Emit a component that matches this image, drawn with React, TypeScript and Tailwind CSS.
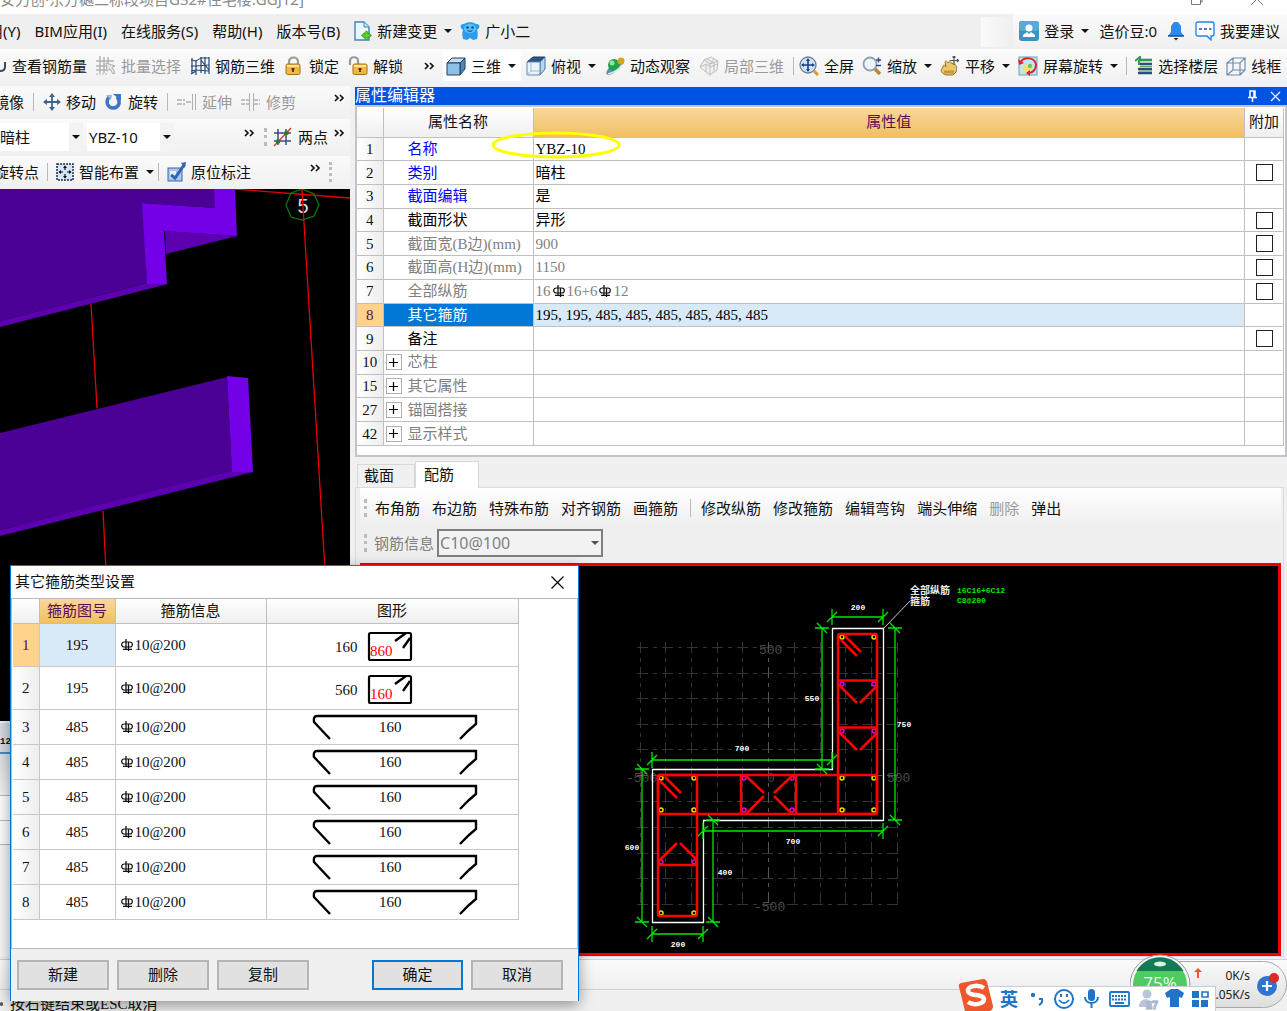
import type { ReactNode } from 'react';

const SONG = "font-['Liberation_Serif','Noto_Sans_CJK_SC',serif]";

/* ---------- icons ---------- */

function Icon({ children, w = 20 }: { children: ReactNode; w?: number }) {
  return (
    <svg width={w} height="20" viewBox={`0 0 ${w} 20`} fill="none" className="shrink-0" aria-hidden="true">
      {children}
    </svg>
  );
}

const NewDocIcon = () => (
  <Icon w={18}>
    <path d="M1 1h9l5 5v13H1z" fill="#eaf6ff" stroke="#3d86b8" strokeWidth="1.4" />
    <path d="M10 1v5h5" fill="#bfe2f7" stroke="#3d86b8" />
    <path d="M12.500 9.500l5.500 5-5.500 5-5.500-5z" fill="#3faa1c" />
    <path d="M12.500 11v7M9 14.500h7" stroke="#67cf35" strokeWidth="2" />
  </Icon>
);

const MascotIcon = () => (
  <Icon>
    <path d="M4 3C7 .5 13 .5 16 3c3 0 4 2 3 4l-2 2c1 2 1 5 0 9l-4 1-3-2-3 2-4-1C2 14 2 11 3 9L1 7C0 5 1 3 4 3z" fill="#2a9df0" />
    <ellipse cx="10" cy="7.500" rx="6" ry="4.500" fill="#5cc2fa" />
    <circle cx="7.500" cy="6.500" r="1.200" fill="#0b3f77" />
    <circle cx="12.500" cy="6.500" r="1.200" fill="#0b3f77" />
    <path d="M7.500 9.500q2.500 2 5 0" stroke="#0b3f77" />
  </Icon>
);

const RebarGridIcon = ({ color = '#23466e' }: { color?: string }) => (
  <Icon>
    <path d="M1 4l5 1 5-3 8 0M1 10l5 0 13-1M1 15l5-1 13 1" stroke={color} />
    <path d="M2 2v16M6 4v15M11 1v16M15 1v17M19 1v17M11 4l8 10M1 18l5-3" stroke={color} strokeWidth="1.200" />
  </Icon>
);

const BatchIcon = () => (
  <Icon>
    <path d="M4 0v17M8 1v16M12 1v8M0 5h18M0 10h12M0 14h12" stroke="#b3b3b3" strokeWidth="1.500" />
    <path d="M0 18h11" stroke="#b3b3b3" strokeDasharray="2 1" />
    <path d="M10 7l9 3-3 1 3 6-2 1-3-5-3 2z" fill="#e5e5e5" stroke="#b0b0b0" />
  </Icon>
);

const LockIcon = ({ open = false }: { open?: boolean }) => (
  <Icon>
    <path d={open ? 'M2 9V5c0-5 8-5 8 0v3' : 'M5 10V6c0-6 9-6 9 0v4'} stroke="#9a9a9a" strokeWidth="2.200" />
    <rect x={open ? 5 : 2} y="8" width="14" height="10.500" rx="1.500" fill="#f4b740" stroke="#a8701a" />
    <path d={open ? 'M6 10h12' : 'M3 10h12'} stroke="#ffe39a" strokeWidth="2" />
    <path d={open ? 'M12 12v4M10.500 13h3' : 'M9 12v4M7.500 13h3'} stroke="#3b2b0a" strokeWidth="1.600" />
  </Icon>
);

const CubeIcon = () => (
  <Icon>
    <path d="M1 7l5-5h13l-5 5z" fill="#c4dff5" stroke="#253f5c" />
    <path d="M14 7l5-5v11l-5 6z" fill="#4f86ba" stroke="#253f5c" />
    <path d="M1 7h13v12H1z" fill="#8ebfe4" stroke="#253f5c" />
  </Icon>
);

const TopViewIcon = () => (
  <Icon>
    <path d="M1 6l6-5h12l-5 5z" fill="#2a5585" stroke="#253f5c" />
    <path d="M14 6l5-5v12l-5 6z" fill="#b9d4ec" stroke="#4873a0" />
    <path d="M1 6h13v13H1z" fill="#eaf4fc" stroke="#5b8abb" />
    <path d="M5 7v8h9M5 15l-4 4" stroke="#9dbbd8" />
  </Icon>
);

const OrbitIcon = () => (
  <Icon>
    <ellipse cx="10" cy="11" rx="11" ry="4" transform="rotate(-42 10 11)" fill="#5d8fb4" />
    <circle cx="9" cy="9" r="6" fill="#1fa34a" />
    <circle cx="7" cy="7" r="2.500" fill="#8be8a0" />
    <circle cx="16" cy="5" r="3.500" fill="#d9a514" />
    <path d="M3 18q9-2 14-9" stroke="#d9ecf8" strokeWidth="1.500" />
  </Icon>
);

const LocalIcon = () => (
  <Icon>
    <path d="M5 4l7-3 7 4-1 9-7 5-4-3-6-5z" fill="#f1f1f1" stroke="#bdbdbd" />
    <path d="M1 11l6-3 5 3 6-3M5 4l6 4 8-3M11 8v11M7 8v8M15 3l-4 5M8 3l7 4v9" stroke="#bdbdbd" />
  </Icon>
);

const FullIcon = () => (
  <Icon>
    <circle cx="9" cy="9" r="8" fill="#cfe2f7" stroke="#6b7f96" strokeWidth="1.300" />
    <path d="M9 3v12M3 9h12" stroke="#1d4287" strokeWidth="1.600" />
    <path d="M9 2L7 5h4zM9 16l-2-3h4zM2 9l3-2v4zM16 9l-3-2v4z" fill="#1d4287" />
    <path d="M15 15l4 4" stroke="#d99b2b" strokeWidth="3" />
  </Icon>
);

const ZoomIcon = () => (
  <Icon>
    <circle cx="8" cy="8" r="6.500" fill="#eef4fb" stroke="#92a0b2" strokeWidth="1.800" />
    <path d="M13 13l5 5" stroke="#b58a3c" strokeWidth="3.500" />
    <path d="M14 4h5M16.500 1.500v5M14 9.500h5" stroke="#2e4b86" strokeWidth="1.400" />
  </Icon>
);

const PanIcon = () => (
  <Icon>
    <path d="M3 11c0-3 2-2 3 0L5 6c1-2 3 0 3 1 1-2 3-1 3 0l3 1c3 1 3 5 2 8l-3 3H6c-3-1-5-3-5-5z" fill="#ecc66a" stroke="#9a7428" />
    <path d="M4 16h10" stroke="#c79838" strokeWidth="3" />
    <path d="M14 0v9M9.500 4.500h9M12.500 1.500L14 0l1.500 1.500M17 3l1.500 1.500L17 6" stroke="#555" strokeWidth="1.200" />
  </Icon>
);

const ScreenRotateIcon = () => (
  <Icon>
    <rect x="1" y="1" width="18" height="18" fill="#bfe6f5" stroke="#5aa7c4" />
    <path d="M4 12l5-5 6 4-4 5-6 1z" fill="#f0e27b" />
    <circle cx="12" cy="10" r="2.200" fill="#74c06c" />
    <path d="M2 7C6 0 17 1 18 9c0 4-3 8-7 8" stroke="#e02424" strokeWidth="2" />
    <path d="M12 14v6l-4-3zM0 3l1 6 5-2z" fill="#e02424" />
  </Icon>
);

const FloorsIcon = () => (
  <Icon w={18}>
    <path d="M5 4h12M5 8h12M3 13h14M3 17h14" stroke="#2a4d86" strokeWidth="2.400" />
    <path d="M5 10.500h12M4 15h13" stroke="#5fa64f" />
    <path d="M0 5l5-4v3h12M4 4v5" stroke="#2c9c46" strokeWidth="2" />
  </Icon>
);

const WireIcon = () => (
  <Icon>
    <path d="M1 7l6-5h12l-5 5zM1 7v12h13V7M19 2v12l-5 5M7 2v12h12M7 14l-6 5" stroke="#6f8db1" strokeWidth="1.200" />
  </Icon>
);

const MoveIcon = () => (
  <Icon w={18}>
    <path d="M9 3v14M2 10h14" stroke="#3e6289" strokeWidth="1.800" />
    <path d="M9 1L6 5h6zM9 19l-3-4h6zM0 10l4-3v6zM18 10l-4-3v6z" fill="#3e6289" />
  </Icon>
);

const RotateIcon = () => (
  <Icon w={18}>
    <path d="M4 5C0 10 3 16 8 16c6 0 8-6 4-11" stroke="#3b76c7" strokeWidth="3.500" />
    <path d="M8 2h8v7z" fill="#3b76c7" />
    <path d="M1 3h6L6 8z" fill="#8cb4e8" />
  </Icon>
);

const ExtendIcon = () => (
  <Icon>
    <path d="M0 8h8M0 12h8M9 10h5" stroke="#b0b0b0" strokeWidth="1.500" strokeDasharray="5 1" />
    <path d="M15.500 2v16M18.500 2v16" stroke="#b0b0b0" />
  </Icon>
);

const TrimIcon = () => (
  <Icon>
    <path d="M0 8h8M0 12h8M13 8h6M13 12h6" stroke="#b0b0b0" strokeWidth="1.500" strokeDasharray="4 1" />
    <path d="M8.500 1v18M12.500 1v18" stroke="#b0b0b0" />
  </Icon>
);

const TwoPointIcon = () => (
  <Icon>
    <path d="M5 2v16M13 2v16M1 6h17M1 14h17" stroke="#3c4a86" strokeWidth="1.500" />
    <path d="M1 19L18 1" stroke="#e03030" strokeWidth="1.300" />
    <circle cx="5" cy="14.500" r="2.300" fill="#2f7d1e" />
    <circle cx="13.500" cy="6" r="2.300" fill="#2f7d1e" />
  </Icon>
);

const SmartIcon = () => (
  <Icon w={18}>
    <rect x="1" y="2" width="16" height="16" fill="#d5e5f6" stroke="#1f2f4a" strokeWidth="1.500" strokeDasharray="2 1" />
    <path d="M9 4v4M9 12v4M3 10h4M11 10h4" stroke="#111" strokeWidth="1.200" />
    <path d="M9 3.500L7 6h4zM9 16.500L7 14h4zM2.500 10L5 8v4zM15.500 10L13 8v4z" fill="#111" />
  </Icon>
);

const AnnotateIcon = () => (
  <Icon w={19}>
    <rect x="1" y="6" width="14" height="13" fill="#a9c8ec" stroke="#41689b" />
    <path d="M3 9h6v7H3z" fill="#e5f0fb" />
    <path d="M4 13l4 3L17 3" stroke="#2e66b5" strokeWidth="3" />
    <path d="M14 1l5-1-1 6z" fill="#2e66b5" />
  </Icon>
);

const UserIcon = () => (
  <Icon>
    <rect x="0" y="0" width="20" height="20" rx="3" fill="#3a93c4" />
    <rect x="0" y="0" width="20" height="10" rx="3" fill="#55abd7" />
    <circle cx="10" cy="7" r="3.500" fill="#fff" />
    <path d="M4 16v-2l4-3 2 2 2-2 4 3v2z" fill="#fff" />
  </Icon>
);

const BellIcon = () => (
  <Icon w={18}>
    <path d="M7 1h4l3 4v6l3 4H1l3-4V5z" fill="#2b8bf2" />
    <path d="M1 15h16" stroke="#174f96" strokeWidth="1.500" />
    <path d="M6.500 17h5L9 19.500z" fill="#263238" />
  </Icon>
);

const ChatIcon = () => (
  <Icon>
    <path d="M3 1h14q2 0 2 2v10q0 2-2 2h-1v4l-4-4H3q-2 0-2-2V3q0-2 2-2z" fill="#fff" stroke="#2b83ea" strokeWidth="1.400" />
    <path d="M4 8h3M9 8h3M14 8h2.500" stroke="#2456a8" strokeWidth="1.500" />
  </Icon>
);

/* ---------- toolbar parts ---------- */

interface ToolProps {
  icon?: ReactNode;
  label: string;
  disabled?: boolean;
  menu?: boolean;
}

function Caret() {
  return (
    <svg width="8" height="4" viewBox="0 0 8 4" className="shrink-0" aria-hidden="true">
      <path d="M0 0h8L4 4z" fill="#111" />
    </svg>
  );
}

function Tool({ icon, label, disabled, menu }: ToolProps) {
  return (
    <button
      type="button"
      disabled={disabled}
      className="flex shrink-0 items-center gap-[5px] whitespace-nowrap disabled:text-[#9a9a9a]"
    >
      {icon}
      <span>{label}</span>
      {menu && (
        <span className="flex w-[10px] justify-end">
          <Caret />
        </span>
      )}
    </button>
  );
}

const Sep = () => <span className="h-[18px] w-px shrink-0 bg-[#b9b9b9]" />;
const Grip = () => <span className="h-[18px] w-0 shrink-0 border-l-[3px] border-dotted border-[#bcbcbc]" />;

const More = () => (
  <button type="button" aria-label="更多" className="mb-2 shrink-0">
    <svg width="11" height="8" viewBox="0 0 11 8" fill="none">
      <path d="M1 1l3 3-3 3M6 1l3 3-3 3" stroke="#111" strokeWidth="1.700" />
    </svg>
  </button>
);

function Combo({ label, value, className }: { label: string; value: string; className: string }) {
  return (
    <span className={`relative flex h-7 shrink-0 items-center bg-white ${className}`}>
      <select aria-label={label} className="w-full appearance-none bg-transparent px-[2px] outline-none">
        <option>{value}</option>
      </select>
      <span className="pointer-events-none absolute inset-y-0 right-0 flex w-[14px] items-center justify-center bg-[#f3f3f3]">
        <Caret />
      </span>
    </span>
  );
}

/* Steel grade mark used in front of a bar diameter */
function Rebar() {
  return (
    <svg width="12" height="12" viewBox="0 0 12 12" fill="none" className="inline-block shrink-0" aria-label="C">
      <rect x=".7" y="3" width="10.600" height="5" rx="2.500" stroke="#111" strokeWidth="1.200" />
      <path d="M5 0v11M7.500 3v9M2 10.400h9" stroke="#111" strokeWidth="1.300" />
    </svg>
  );
}

/* ---------- property editor ---------- */

interface PropertyRow {
  no: number;
  name: string;
  value?: ReactNode;
  tone: 'blue' | 'black' | 'gray';
  check?: boolean;
  group?: boolean;
}

const PROPERTIES: PropertyRow[] = [
  { no: 1, name: '名称', value: 'YBZ-10', tone: 'blue' },
  { no: 2, name: '类别', value: '暗柱', tone: 'blue', check: true },
  { no: 3, name: '截面编辑', value: '是', tone: 'blue' },
  { no: 4, name: '截面形状', value: '异形', tone: 'black', check: true },
  { no: 5, name: '截面宽(B边)(mm)', value: '900', tone: 'gray', check: true },
  { no: 6, name: '截面高(H边)(mm)', value: '1150', tone: 'gray', check: true },
  {
    no: 7,
    name: '全部纵筋',
    value: (
      <span className="flex items-center gap-[2px]">
        16
        <Rebar />
        16+6
        <Rebar />
        12
      </span>
    ),
    tone: 'gray',
    check: true,
  },
  { no: 8, name: '其它箍筋', value: '195, 195, 485, 485, 485, 485, 485, 485', tone: 'black' },
  { no: 9, name: '备注', tone: 'black', check: true },
  { no: 10, name: '芯柱', tone: 'gray', group: true },
  { no: 15, name: '其它属性', tone: 'gray', group: true },
  { no: 27, name: '锚固搭接', tone: 'gray', group: true },
  { no: 42, name: '显示样式', tone: 'gray', group: true },
];

const TONES = { blue: 'text-[#0000ff]', black: 'text-black', gray: 'text-[#808080]' };

const HEAD = 'border-r border-b border-[#c0c0c0] p-0 font-normal bg-gradient-to-b';
const HEAD_PLAIN = `${HEAD} from-white to-[#efefef]`;
const HEAD_ACTIVE = `${HEAD} from-[#f8d79b] to-[#f0bf60] text-[#5c0a5c]`;

function PropertyTable() {
  return (
    <div className={`relative h-[352px] shrink-0 border-2 border-[#c3c3c9] bg-white pt-px pr-[1px] text-[15px] leading-5 ${SONG}`}>
      <table className="h-[338px] w-full table-fixed border-collapse">
        <colgroup>
          <col className="w-[26px]" />
          <col className="w-[150px]" />
          <col />
          <col className="w-[39px]" />
        </colgroup>
        <thead>
          <tr className="h-[29px]">
            <th className={HEAD_PLAIN} />
            <th className={HEAD_PLAIN}>属性名称</th>
            <th className={HEAD_ACTIVE}>属性值</th>
            <th className={HEAD_PLAIN}>附加</th>
          </tr>
        </thead>
        <tbody>
          {PROPERTIES.map((row) => {
            const active = row.no === 8;
            return (
              <tr key={row.no}>
                <td
                  className={`border-r border-b border-[#c0c0c0] p-0 text-center ${
                    active ? 'bg-[#ffd38c] text-[#5c0a5c]' : 'bg-gradient-to-r from-white to-[#ededed]'
                  }`}
                >
                  {row.no}
                </td>
                <td
                  className={`border-r border-b border-[#c0c0c0] p-0 whitespace-nowrap ${
                    active ? 'bg-[#0078d7] text-white' : TONES[row.tone]
                  }`}
                >
                  <span className="flex items-center">
                    <span className="flex w-6 shrink-0 pl-[2px]">
                      {row.group && (
                        <button
                          type="button"
                          aria-label={`展开${row.name}`}
                          className="flex size-4 items-center justify-center border border-[#b0b0b0] bg-white"
                        >
                          <svg width="9" height="9" viewBox="0 0 9 9" aria-hidden="true">
                            <path d="M0 4.500h9M4.500 0v9" stroke="#000" strokeWidth="1.200" />
                          </svg>
                        </button>
                      )}
                    </span>
                    {row.name}
                  </span>
                </td>
                <td
                  className={`border-r border-b border-[#c0c0c0] py-0 pr-0 pl-[2px] ${active ? 'bg-[#d8e9f8]' : ''} ${
                    row.tone === 'gray' ? 'text-[#808080]' : 'text-black'
                  }`}
                >
                  {row.value}
                </td>
                <td className="border-r border-b border-[#c0c0c0] p-0">
                  {row.check && (
                    <input
                      type="checkbox"
                      aria-label={`附加${row.name}`}
                      className="mx-auto block size-[17px] appearance-none border border-[#222] bg-white"
                    />
                  )}
                </td>
              </tr>
            );
          })}
        </tbody>
      </table>
      {/* hand-drawn mark around the member name */}
      <svg width="130" height="30" viewBox="0 0 130 30" className="pointer-events-none absolute top-[23px] left-[134px]" aria-hidden="true">
        <ellipse cx="65" cy="15" rx="63" ry="12" fill="none" stroke="#ffff00" strokeWidth="3" />
      </svg>
    </div>
  );
}

/* ---------- 3D view ---------- */

function ModelView() {
  return (
    <div className="min-h-0 flex-1 overflow-hidden bg-black">
      <svg width="350" height="540" viewBox="0 189 350 540" fill="none">
        <path d="M0 189H216V208L143 203 147 283 0 321z" fill="#4b0096" />
        <path d="M0 321L147 283 168 284 0 327z" fill="#5c00b0" />
        <path d="M165 231L237 236 166 254z" fill="#5c00b0" />
        <path d="M214 189H235L237 236 164 231 167 284H147L142 203 215 208z" fill="#7300e6" />
        <path d="M0 433L227 377 232 472 0 530z" fill="#4b0096" />
        <path d="M0 530L232 471 253 472 0 536z" fill="#5c00b0" />
        <path d="M227 376L248 378 253 472H232z" fill="#7300e6" />
        <text x="303" y="213" textAnchor="middle" fill="#d8d8d8" fontSize="20" fontFamily="Liberation Sans">5</text>
        <path d="M91 304L97 408M103 511L107 590M234 189L350 198M302 190L328 620" stroke="#e60000" strokeWidth="1.300" />
        <path d="M291 193L302 189 314 194 319 205 314 216 302 220 291 217 286 205z" stroke="#008000" strokeWidth="1.200" />
      </svg>
    </div>
  );
}

/* ---------- section drawing ---------- */

const GRID_X = [640, 665, 691, 717, 742, 794, 820, 845, 871, 897];
const GRID_Y = [647, 673, 698, 724, 749, 801, 827, 853, 878, 904];
const CORNER_BARS = [
  [842, 637], [874, 637], [842, 778], [874, 778], [842, 810], [874, 810],
  [661, 778], [694, 778], [661, 810], [694, 810], [661, 913], [694, 913],
];
const SIDE_BARS = [
  [842, 684], [874, 684], [842, 731], [874, 731], [744, 778],
  [792, 778], [744, 810], [792, 810], [661, 862], [694, 862],
];

// [x1, y1, x2, y2, label, label x, label y]
const DIMENSIONS: [number, number, number, number, string, number, number][] = [
  [832, 617, 883, 617, '200', 858, 610],
  [822, 628, 822, 769, '550', 812, 701],
  [895, 628, 895, 820, '750', 904, 727],
  [652, 760, 832, 760, '700', 742, 751],
  [642, 769, 642, 922, '600', 632, 850],
  [703, 831, 883, 831, '700', 793, 844],
  [713, 820, 713, 922, '400', 725, 875],
  [652, 934, 703, 934, '200', 678, 947],
];

function Dimension({ d }: { d: (typeof DIMENSIONS)[number] }) {
  const [x1, y1, x2, y2, label, lx, ly] = d;
  const flat = y1 === y2;
  const tick = (x: number, y: number) =>
    flat ? `M${x} ${y - 8}V${y + 8}M${x - 5} ${y + 5}L${x + 5} ${y - 5}` : `M${x - 7} ${y}H${x + 7}M${x - 5} ${y - 5}L${x + 5} ${y + 5}`;
  return (
    <g>
      <path d={`M${x1} ${y1}L${x2} ${y2}${tick(x1, y1)}${tick(x2, y2)}`} stroke="#00e600" strokeWidth="1.300" />
      <text x={lx} y={ly} textAnchor="middle" fill="#fff" fontSize="8" fontWeight="bold">{label}</text>
    </g>
  );
}

function SectionView() {
  return (
    <div className="min-h-0 flex-1 overflow-hidden border-[3px] border-[#f00000] bg-black">
      <svg width="700" height="385" viewBox="363 566 700 385" fill="none" fontFamily="Liberation Mono, Noto Sans CJK SC, monospace">
        <g stroke="#333" strokeWidth="1" strokeDasharray="11 5 4 5">
          {GRID_X.map((x) => (
            <path key={x} d={`M${x}.5 642V908`} />
          ))}
          {GRID_Y.map((y) => (
            <path key={y} d={`M637 ${y}.500H902`} />
          ))}
          <path d="M768.500 642V908M637 775.500H902" stroke="#555" />
        </g>
        <g fill="#4a4a4a" fontSize="13">
          <text x="759" y="654">500</text>
          <text x="626" y="782">-500</text>
          <text x="767" y="782">0</text>
          <text x="887" y="782">500</text>
          <text x="754" y="911">-500</text>
        </g>
        <path d="M652.500 769.500H832.500V628.500H883.500V820.500H703.500V922.500H652.500z" stroke="#fff" strokeWidth="1.300" />
        <g strokeWidth="1.500">
          {CORNER_BARS.map(([x, y]) => (
            <circle key={`${x}-${y}`} cx={x} cy={y} r="2" stroke="#e6e600" />
          ))}
          {SIDE_BARS.map(([x, y]) => (
            <circle key={`${x}-${y}`} cx={x} cy={y} r="2" stroke="#e600e6" />
          ))}
        </g>
        <g stroke="#ff0000" strokeWidth="2.500">
          <rect x="658" y="775" width="39" height="141" rx="2" />
          <rect x="658" y="775" width="219" height="39" rx="2" />
          <rect x="838" y="634" width="39" height="180" rx="2" />
          <path d="M658 865H697M741 775V814M796 775V814M838 680.500H877M838 727.500H877" />
          <path d="M841 640L857 656M845 636L861 652M660 781L677 798M665 777L681 793" />
          <path d="M839 685L857 703M877 686L860 703M839 732L857 750M877 733L860 750" />
          <path d="M677 843L659 861M680 843L697 860" />
          <path d="M746 776L764 793M792 776L774 793M764 796L746 814M774 796L792 814" />
        </g>
        {DIMENSIONS.map((d) => (
          <Dimension key={`${d[0]}-${d[1]}-${d[4]}`} d={d} />
        ))}
        <path d="M884 628L910 601" stroke="#ccc" />
        <g fontSize="10" fontWeight="bold" fill="#eee">
          <text x="910" y="594">全部纵筋</text>
          <text x="910" y="605">箍筋</text>
        </g>
        <g fontSize="8" fontWeight="bold" fill="#00e600">
          <text x="957" y="593">16C16+6C12</text>
          <text x="957" y="603">C8@200</text>
        </g>
      </svg>
    </div>
  );
}

function SectionPanel() {
  return (
    <div className="flex min-h-0 flex-1 flex-col">
      <div className={`flex h-[30px] shrink-0 items-end pl-[2px] text-[15px] leading-5 ${SONG}`} role="tablist">
        <button type="button" role="tab" aria-selected="false" className="h-[23px] w-[58px] border border-b-0 border-[#d9d9d9] pr-[14px]">
          截面
        </button>
        <button type="button" role="tab" aria-selected="true" className="z-10 -mb-px h-[27px] w-[64px] border border-b-0 border-[#d9d9d9] bg-white pr-4">
          配筋
        </button>
      </div>
      <div className="mr-[3px] flex min-h-0 flex-1 flex-col border border-[#dcdcdc] bg-[#efefef] pr-[2px] pl-1">
        <div className="flex h-[37px] shrink-0 items-center gap-3 bg-gradient-to-b from-white to-[#efefef] pt-[2px] pl-1">
          <Grip />
          <div className="-ml-1 flex items-center gap-3">
            <Tool label="布角筋" />
            <Tool label="布边筋" />
            <Tool label="特殊布筋" />
            <Tool label="对齐钢筋" />
            <Tool label="画箍筋" />
            <span className="-mr-[2px] flex">
              <Sep />
            </span>
            <Tool label="修改纵筋" />
            <Tool label="修改箍筋" />
            <Tool label="编辑弯钩" />
            <Tool label="端头伸缩" />
            <Tool label="删除" disabled />
            <Tool label="弹出" />
          </div>
        </div>
        <div className="flex h-[38px] shrink-0 items-center pb-[2px] pl-1">
          <Grip />
          <label htmlFor="rebar-info" className="ml-[7px] text-[#808080]">钢筋信息</label>
          <span className="relative ml-[3px] flex">
            <select
              id="rebar-info"
              disabled
              className="h-7 w-[166px] appearance-none border-2 border-[#808080] bg-[#f2f2f2] pl-[1px] text-[16px] text-[#808080] opacity-100"
            >
              <option>C10@100</option>
            </select>
            <span className="pointer-events-none absolute top-3 right-1 opacity-70">
              <Caret />
            </span>
          </span>
        </div>
        <SectionView />
      </div>
    </div>
  );
}

/* ---------- stirrup dialog ---------- */

interface Stirrup {
  type: string;
  side?: string;
  length: string;
}

const STIRRUPS: Stirrup[] = [
  { type: '195', side: '160', length: '860' },
  { type: '195', side: '560', length: '160' },
  { type: '485', length: '160' },
  { type: '485', length: '160' },
  { type: '485', length: '160' },
  { type: '485', length: '160' },
  { type: '485', length: '160' },
  { type: '485', length: '160' },
];

function StirrupShape({ item }: { item: Stirrup }) {
  if (item.side) {
    return (
      <svg width="250" height="40" viewBox="0 0 250 40" fill="none" className="block" fontSize="15">
        <text x="68" y="27" fill="#111">{item.side}</text>
        <text x="103" y="31" fill="#ff0000">{item.length}</text>
        <rect x="102" y="8" width="42" height="27" rx="1.500" stroke="#000" strokeWidth="2.200" />
        <path d="M139 8L128 16M143 13L136 23" stroke="#000" strokeWidth="2.400" />
      </svg>
    );
  }
  return (
    <svg width="250" height="33" viewBox="0 0 250 33" fill="none" className="block" fontSize="15">
      <path d="M50 6H209V14L202 20 193 29M50 6Q46 6 47 12L63 29" stroke="#000" strokeWidth="2.400" />
      <text x="112" y="22" fill="#111">{item.length}</text>
    </svg>
  );
}

const DIALOG_BUTTON = 'h-[30px] w-[92px] border-2 border-[#b5b5b5] bg-[#e1e1e1]';

function StirrupDialog() {
  return (
    <div
      role="dialog"
      aria-label="其它箍筋类型设置"
      className={`absolute bottom-[10px] left-[10px] z-20 flex h-[436px] w-[569px] flex-col border border-b-0 border-[#0078d7] bg-[#f0f0f0] text-[15px] leading-5 shadow-[0_4px_14px_rgba(0,0,0,0.4)] ${SONG}`}
    >
      <div className="flex h-8 shrink-0 items-center justify-between bg-white pr-[14px] pl-1">
        <span>其它箍筋类型设置</span>
        <button type="button" aria-label="关闭">
          <svg width="13" height="13" viewBox="0 0 13 13">
            <path d="M.5.5l12 12M12.500.5l-12 12" stroke="#000" strokeWidth="1.200" />
          </svg>
        </button>
      </div>
      <div className="h-[351px] shrink-0 border border-[#b9b9bf] bg-white pl-px">
        <table className="table-fixed border-collapse">
          <colgroup>
            <col className="w-[26px]" />
            <col className="w-[76px]" />
            <col className="w-[151px]" />
            <col className="w-[252px]" />
          </colgroup>
          <thead>
            <tr className="h-6">
              <th className={HEAD_PLAIN} />
              <th className={HEAD_ACTIVE}>箍筋图号</th>
              <th className={HEAD_PLAIN}>箍筋信息</th>
              <th className={HEAD_PLAIN}>图形</th>
            </tr>
          </thead>
          <tbody>
            {STIRRUPS.map((item, i) => (
              <tr key={i} className={item.side ? 'h-[43px]' : 'h-[35px]'}>
                <td
                  className={`border-r border-b border-[#c8c8c8] p-0 text-center ${
                    i === 0 ? 'bg-[#ffd38c] text-[#5c0a5c]' : 'bg-gradient-to-r from-white to-[#ededed]'
                  }`}
                >
                  {i + 1}
                </td>
                <td className={`border-r border-b border-[#c8c8c8] p-0 text-center ${i === 0 ? 'bg-[#d8e9f8]' : ''}`}>
                  {item.type}
                </td>
                <td className="border-r border-b border-[#c8c8c8] py-0 pr-0 pl-[5px]">
                  <span className="flex items-center gap-[2px]">
                    <Rebar />
                    10@200
                  </span>
                </td>
                <td className="border-r border-b border-[#c8c8c8] p-0">
                  <StirrupShape item={item} />
                </td>
              </tr>
            ))}
          </tbody>
        </table>
      </div>
      <div className="flex flex-1 items-center gap-2 pr-[15px] pl-[6px]">
        <button type="button" className={DIALOG_BUTTON}>新建</button>
        <button type="button" className={DIALOG_BUTTON}>删除</button>
        <button type="button" className={DIALOG_BUTTON}>复制</button>
        <button type="button" className="ml-auto h-[30px] w-[91px] border-2 border-[#0078d7] bg-[#e1e1e1]">确定</button>
        <button type="button" className={DIALOG_BUTTON}>取消</button>
      </div>
    </div>
  );
}

/* ---------- floating tray widgets ---------- */

function SpeedBall() {
  return (
    <div className="absolute right-0 bottom-[3px] z-20 flex h-[47px] w-[128px] items-center justify-end rounded-r-full border border-[#a9a9a9] bg-gradient-to-b from-[#fafafa] to-[#dedede] pr-[7px] text-[12px] leading-[19px] text-[#222]">
      <div className="mr-[7px] text-right">
        <p>0K/s</p>
        <p>0.05K/s</p>
      </div>
      <svg width="22" height="26" viewBox="0 0 22 26" fill="none" className="shrink-0" aria-hidden="true">
        <circle cx="10" cy="14" r="10" fill="#2f74d0" />
        <path d="M10 9v10M5 14h10" stroke="#fff" strokeWidth="2.200" />
        <circle cx="17" cy="6" r="5" fill="#d92b2b" />
      </svg>
      <svg width="80" height="56" viewBox="0 0 80 56" className="absolute -top-2 -left-[30px]" fontFamily="Open Sans, sans-serif" aria-hidden="true">
        <circle cx="30" cy="31" r="30" fill="#f4f4f4" stroke="#9a9a9a" />
        <circle cx="30" cy="31" r="27" fill="#4fcb63" />
        <path d="M6.500 17a27 27 0 0 1 47 0z" fill="#137a55" />
        <ellipse cx="30" cy="10" rx="6" ry="2.500" fill="#d5f5e0" />
        <text x="30" y="35" textAnchor="middle" fontSize="17" fill="#e9ffe9">75%</text>
        <path d="M68 14l4 4h-3v6h-2v-6h-3z" fill="#f0553a" />
      </svg>
    </div>
  );
}

function ImeBar() {
  return (
    <div className="absolute right-[71px] bottom-0 z-30 flex h-[25px] w-[250px] items-center border border-b-0 border-[#c9ccd6] bg-white text-[#1f74c8]">
      <svg width="258" height="32" viewBox="0 0 258 32" fill="none" className="absolute right-0 bottom-0" aria-label="英">
        <path d="M2 8Q1 5 4 4L26 0q3 0 4 3l6 24q0 4-3 5H8z" fill="#f0562b" />
        <path d="M27 9C21 5 10 7 11 12c1 6 15 2 16 8 0 5-10 7-16 3" stroke="#fff" strokeWidth="4.500" />
        <text x="43" y="27" fontSize="18" fontWeight="bold" fill="#1f74c8" fontFamily="Noto Sans CJK SC">英</text>
        <circle cx="76" cy="16" r="2.200" fill="#1f74c8" />
        <path d="M82 20h3q1 4-3 6" stroke="#1f74c8" strokeWidth="2" />
        <circle cx="107" cy="20" r="9" stroke="#1f74c8" strokeWidth="2" />
        <path d="M102 21q5 6 10 0" stroke="#1f74c8" strokeWidth="1.800" />
        <path d="M104 15v3M110 15v3" stroke="#1f74c8" strokeWidth="2" />
        <rect x="131" y="10" width="7" height="12" rx="3.500" fill="#1f74c8" />
        <path d="M128 18c0 8 13 8 13 0M134.500 24v5" stroke="#1f74c8" strokeWidth="2" />
        <rect x="153" y="13" width="19" height="14" rx="1" stroke="#1f74c8" strokeWidth="1.800" />
        <path d="M155 17h15M155 20.500h15" stroke="#1f74c8" strokeWidth="2" strokeDasharray="2 1" />
        <path d="M158 24h9" stroke="#1f74c8" strokeWidth="2" />
        <circle cx="190" cy="15" r="4.500" fill="#b9c5d8" />
        <path d="M182 28q0-8 8-8l6 8z" fill="#b9c5d8" />
        <text x="189" y="30" fontSize="11" fontWeight="bold" fill="#fff" stroke="#9badc8" strokeWidth="1" fontFamily="Liberation Sans">27</text>
        <path d="M208 14l6-4h7l6 4-2 5-3-1v10h-9V18l-3 1z" fill="#1f74c8" />
        <path d="M235 12h7v7h-7zM235 21h7v7h-7zM244 21h7v7h-7z" fill="#1f74c8" />
        <path d="M245 13h6v5h-6z" stroke="#1f74c8" strokeWidth="1.600" />
      </svg>
    </div>
  );
}

/* ---------- page ---------- */

const LEFT_ROW = 'flex shrink-0 items-center overflow-hidden bg-gradient-to-b from-[#fafafa] to-[#f0f0f0] pb-[2px]';

export default function App() {
  return (
    <div className="relative flex h-screen flex-col overflow-hidden bg-[#f0f0f0] font-['Noto_Sans','Noto_Sans_CJK_SC',sans-serif] text-[15px] leading-5 text-[#111]">
      <header className="flex h-[14px] shrink-0 items-start justify-between overflow-hidden bg-white text-[#8a8a8a]">
        <span className="-mt-[11px] whitespace-nowrap">安力创·东方樾二标段项目G32#住宅楼.GGJ12]</span>
        <svg width="72" height="6" viewBox="0 0 72 6" fill="none" className="mr-6" aria-hidden="true">
          <path d="M.5-4v8.500h9V-4M9 2h2V-4M60 5l6-6 6 6" stroke="#777" />
        </svg>
      </header>

      <nav className="flex h-[35px] shrink-0 items-center overflow-hidden bg-[#efefef]">
        <div className="-ml-3 flex shrink-0 items-center gap-[14px] pb-[2px]">
          <Tool label="用(Y)" />
          <Tool label="BIM应用(I)" />
          <Tool label="在线服务(S)" />
          <Tool label="帮助(H)" />
          <Tool label="版本号(B)" />
          <Tool icon={<NewDocIcon />} label="新建变更" menu />
        </div>
        <div className="ml-2 shrink-0 pb-[2px]">
          <Tool icon={<MascotIcon />} label="广小二" />
        </div>
        <span className="ml-auto h-[30px] w-8 shrink-0 bg-gradient-to-r from-[#fafafa] to-[#efefef]" />
        <div className="flex h-full shrink-0 items-center gap-[10px] bg-gradient-to-b from-[#fafafa] to-[#f0f0f0] pr-[7px] pb-[2px] pl-[6px]">
          <Tool icon={<UserIcon />} label="登录" menu />
          <Tool label="造价豆:0" />
          <BellIcon />
          <Tool icon={<ChatIcon />} label="我要建议" />
        </div>
      </nav>

      <div className="flex h-[37px] shrink-0 items-center overflow-hidden bg-gradient-to-b from-[#fbfbfb] to-[#f0f0f0] pb-[3px]">
        <div className="flex w-[443px] shrink-0 items-center gap-[9px]">
          <Tool
            icon={
              <Icon w={7}>
                <path d="M5 6v5q0 4-5 4" stroke="#3c4a66" strokeWidth="2" />
              </Icon>
            }
            label="查看钢筋量"
          />
          <Tool icon={<BatchIcon />} label="批量选择" disabled />
          <Tool icon={<RebarGridIcon />} label="钢筋三维" />
          <Tool icon={<LockIcon />} label="锁定" />
          <Tool icon={<LockIcon open />} label="解锁" />
          <span className="mr-2 ml-auto">
            <More />
          </span>
        </div>
        <div className="flex shrink-0 items-center gap-[9px]">
          <div className="-mr-1 flex h-[30px] items-center bg-white pr-[5px] pl-[3px]">
            <Tool icon={<CubeIcon />} label="三维" menu />
          </div>
          <Tool icon={<TopViewIcon />} label="俯视" menu />
          <Tool icon={<OrbitIcon />} label="动态观察" />
          <Tool icon={<LocalIcon />} label="局部三维" disabled />
          <Sep />
          <div className="-ml-1 flex items-center gap-2">
            <Tool icon={<FullIcon />} label="全屏" />
            <Tool icon={<ZoomIcon />} label="缩放" menu />
            <Tool icon={<PanIcon />} label="平移" menu />
            <Tool icon={<ScreenRotateIcon />} label="屏幕旋转" menu />
            <Sep />
            <Tool icon={<FloorsIcon />} label="选择楼层" />
            <Tool icon={<WireIcon />} label="线框" />
          </div>
        </div>
      </div>

      <main className="flex min-h-0 flex-1">
        <section className="flex w-[350px] shrink-0 flex-col">
          <div className={`${LEFT_ROW} h-[33px] gap-[9px]`}>
            <span className="-ml-[6px]">
              <Tool label="镜像" />
            </span>
            <Sep />
            <Tool icon={<MoveIcon />} label="移动" />
            <Tool icon={<RotateIcon />} label="旋转" />
            <Sep />
            <Tool icon={<ExtendIcon />} label="延伸" disabled />
            <Tool icon={<TrimIcon />} label="修剪" disabled />
            <span className="mr-[5px] ml-auto flex">
              <More />
            </span>
          </div>
          <div className={`${LEFT_ROW} h-[37px]`}>
            <Combo label="构件类型" value="暗柱" className="-ml-[2px] w-[85px]" />
            <Combo label="构件" value="YBZ-10" className="ml-1 w-[87px]" />
            <span className="mr-[9px] ml-auto flex">
              <More />
            </span>
            <Grip />
            <span className="ml-[6px]">
              <Tool icon={<TwoPointIcon />} label="两点" />
            </span>
            <span className="mr-[5px] ml-[6px] flex">
              <More />
            </span>
          </div>
          <div className={`${LEFT_ROW} h-[33px] gap-2`}>
            <span className="-ml-[6px]">
              <Tool label="旋转点" />
            </span>
            <Sep />
            <Tool icon={<SmartIcon />} label="智能布置" menu />
            <span className="-ml-1 flex">
              <Sep />
            </span>
            <Tool icon={<AnnotateIcon />} label="原位标注" />
            <span className="ml-auto flex">
              <More />
            </span>
            <span className="mr-[18px]">
              <Grip />
            </span>
          </div>
          <ModelView />
          <div className="h-[236px] shrink-0 bg-[#f7f7f7]">
            <div className="h-[33px] border-y-2 border-t-[#e8f2fb] border-b-[#3c8fd6] bg-[#d5dbe4] pt-3 font-mono text-[9px] leading-[14px] font-bold">12</div>
            <div className="h-[42px] border-b border-[#b8b8c0] bg-gradient-to-b from-[#dedede] to-[#f4f4f4]" />
            <div className="h-[25px] border-b border-[#b8b8c0] bg-gradient-to-r from-white to-[#ededed]" />
            <div className="h-6 border-b border-[#b8b8c0] bg-white" />
          </div>
        </section>

        <section className="ml-[5px] flex min-w-0 flex-1 flex-col">
          <div className={`mt-px flex h-[18px] shrink-0 items-center bg-[#0054e3] pr-[6px] text-[16px] leading-[18px] text-white ${SONG}`}>
            <span>属性编辑器</span>
            <span className="ml-auto flex items-center gap-3">
              <button type="button" aria-label="固定">
                <svg width="11" height="12" viewBox="0 0 11 12" fill="none">
                  <path d="M3 7V1h5v6M1 7.500h9M5.500 8v4M7 1v6" stroke="#fff" strokeWidth="1.500" />
                </svg>
              </button>
              <button type="button" aria-label="关闭">
                <svg width="11" height="11" viewBox="0 0 11 11">
                  <path d="M1 1l9 9M10 1l-9 9" stroke="#fff" strokeWidth="1.200" />
                </svg>
              </button>
            </span>
          </div>
          <PropertyTable />
          <SectionPanel />
        </section>
      </main>

      <footer className="h-[54px] shrink-0 pt-[2px]">
        <div className="h-[31px] border-y border-[#d2d2d2] bg-gradient-to-b from-[#fbfbfb] to-[#efefef]" />
        <p className={`mt-1 flex items-center gap-[7px] whitespace-nowrap ${SONG}`}>
          <span className="h-1 w-[3px] rounded-full bg-[#555]" />
          按右键结束或ESC取消
        </p>
      </footer>

      <StirrupDialog />
      <SpeedBall />
      <ImeBar />
    </div>
  );
}
